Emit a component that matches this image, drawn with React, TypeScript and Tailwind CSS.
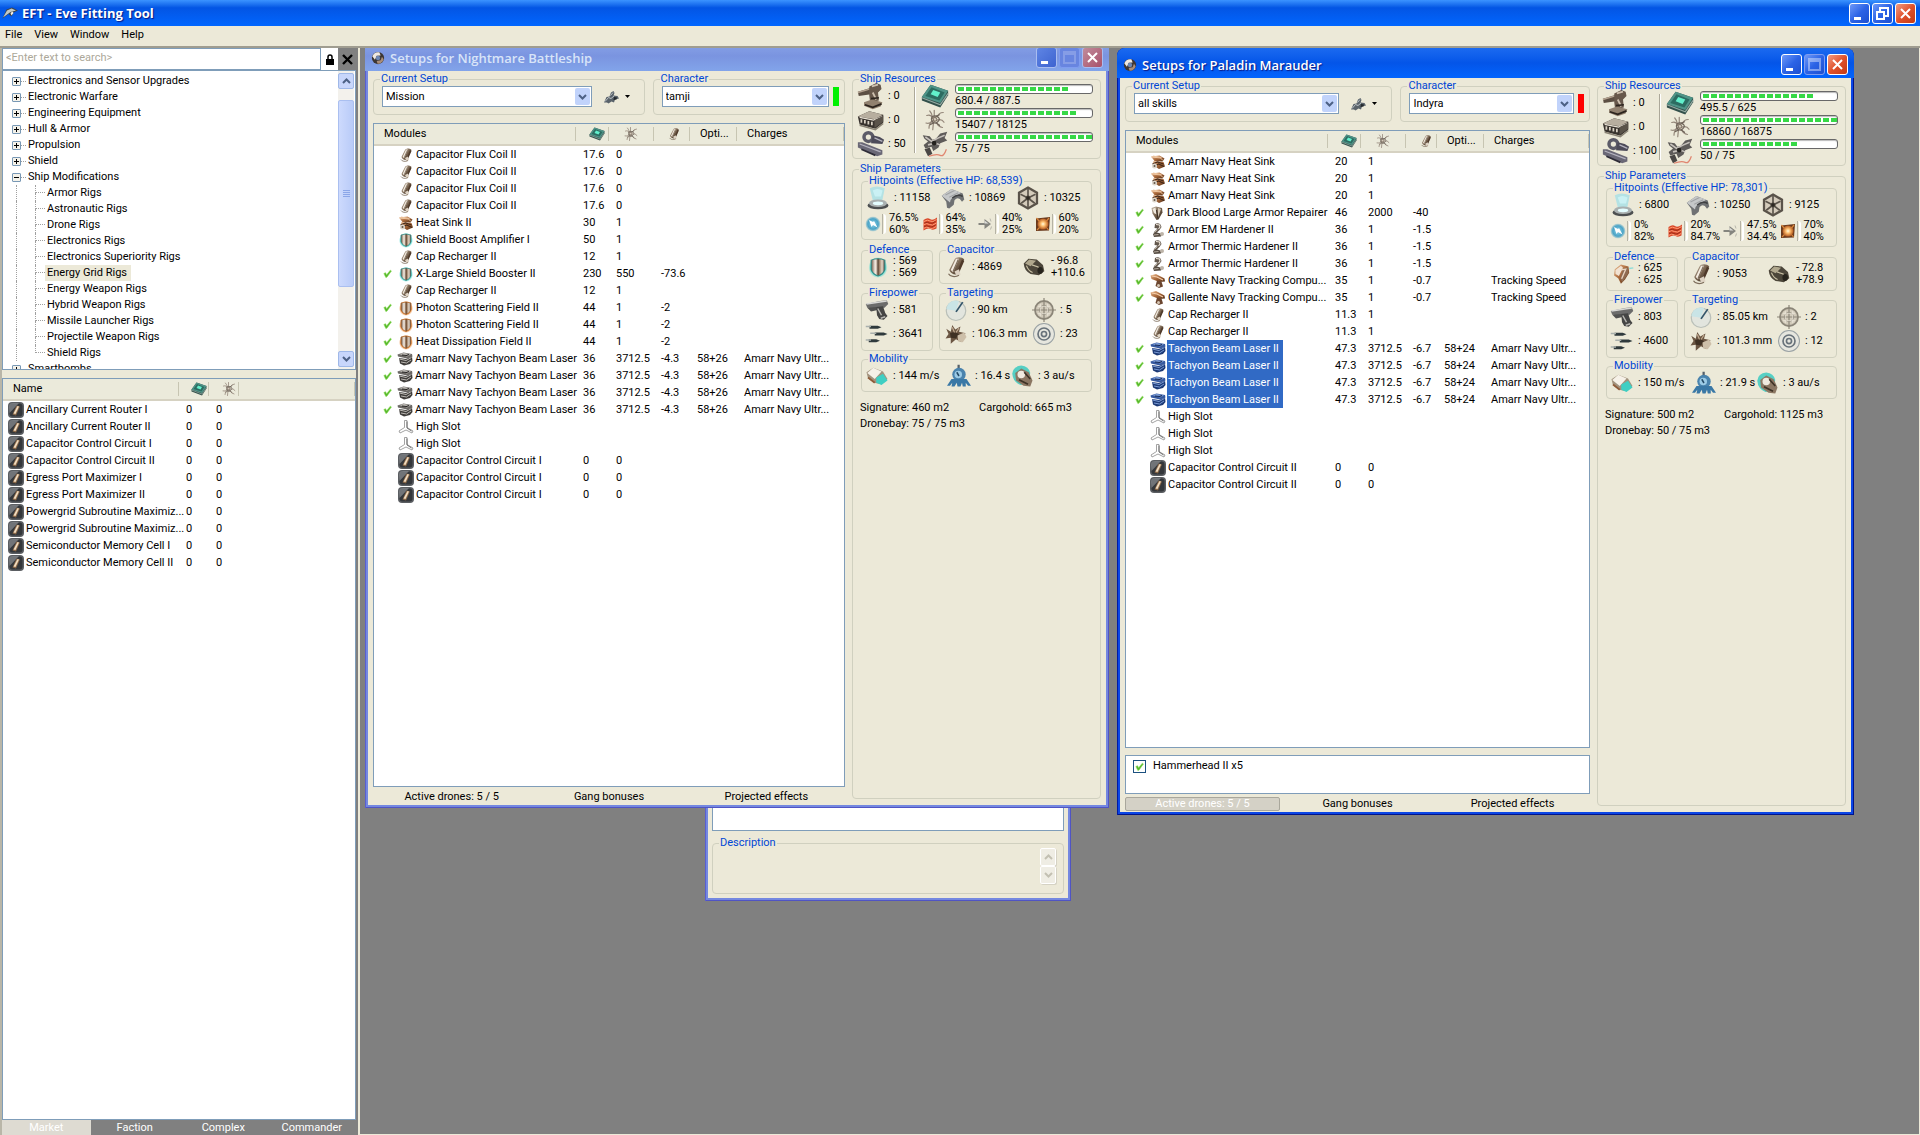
import React from 'react';
import { clsx } from 'clsx';

/* ---------- icons ---------- */

const Defs = () => (
  <svg className="absolute h-0 w-0" aria-hidden="true">
    <defs>
      <linearGradient id="steel" x1="0" y1="0" x2="1" y2="1">
        <stop offset="0" stopColor="#e2e0da" />
        <stop offset=".5" stopColor="#83817b" />
        <stop offset="1" stopColor="#2b2a28" />
      </linearGradient>
      <linearGradient id="bronze" x1="0" y1="0" x2="1" y2="1">
        <stop offset="0" stopColor="#c5b7a4" />
        <stop offset=".5" stopColor="#75604c" />
        <stop offset="1" stopColor="#2c231b" />
      </linearGradient>
      <linearGradient id="copper" x1="0" y1="0" x2="1" y2="1">
        <stop offset="0" stopColor="#efc095" />
        <stop offset=".5" stopColor="#a9683a" />
        <stop offset="1" stopColor="#4e2c16" />
      </linearGradient>
      <linearGradient id="plate" x1="0" y1="0" x2="1" y2="0">
        <stop offset="0" stopColor="#6d5340" />
        <stop offset=".3" stopColor="#f6efe6" />
        <stop offset=".55" stopColor="#8b6a4f" />
        <stop offset=".8" stopColor="#e6d9ca" />
        <stop offset="1" stopColor="#4a3a30" />
      </linearGradient>
      <radialGradient id="tealGlow">
        <stop offset=".7" stopColor="#3fd6cd" />
        <stop offset="1" stopColor="#4fd8cf" stopOpacity="0" />
      </radialGradient>
      <radialGradient id="orangeGlow">
        <stop offset=".7" stopColor="#ee8a36" />
        <stop offset="1" stopColor="#e98b3e" stopOpacity="0" />
      </radialGradient>
      <radialGradient id="emGlow">
        <stop offset="0" stopColor="#8fd3ea" />
        <stop offset=".7" stopColor="#4aa3c6" />
        <stop offset="1" stopColor="#4aa3c6" stopOpacity="0.2" />
      </radialGradient>
      <radialGradient id="fireGlow">
        <stop offset="0" stopColor="#fffbe0" />
        <stop offset=".4" stopColor="#ffc070" />
        <stop offset="1" stopColor="#b2581f" />
      </radialGradient>
    </defs>
  </svg>
);

const icons: Record<string, React.ReactNode> = {
  board: (
    <>
      <path d="M1 17 11 3l20 7v5L22 29 1 21Z" fill="#33504b" />
      <path d="M1 17 11 3l20 7-9 14Z" fill="#4f9488" />
      <path d="M5 16 12 6l15 6-6 9Z" fill="#2c6c61" />
      <path d="m11 14 3-5 8 3-3 5Z" fill="#62f0cc" />
      <path d="m1 18 21 8 9-13" stroke="#93aaa2" strokeWidth="1.5" fill="none" />
    </>
  ),
  grid: (
    <g fill="none" stroke="#94877a" strokeWidth="1.6" strokeLinecap="round">
      <path d="M15 3v10M14 19l-1 10M5 10q6-2 8 4M4 20q5 2 8-3M19 12q2-6 8-6M19 16q6-2 9 3M18 19q2 6 8 7M8 27q0-6 4-9M9 4q3 3 4 9" />
      <path d="M12 12q4-3 8 0t-1 7q-5 2-7-1t0-6ZM10 22q6-5 12 1M22 9q-6 2-9 9" stroke="#6f645a" />
      <path d="M13 14q3-3 5 0t-3 4Z" fill="#d4c9bc" stroke="#857869" />
    </g>
  ),
  cap: (
    <>
      <path d="M7 20 14 6c2-4 10-4 13 0L19 24c-2 4-10 2-12-4Z" fill="url(#bronze)" />
      <path d="m9 20 7-15h4l-8 18Z" fill="#f3ebe0" />
      <path d="m17 24 7-18 3 2-7 16Z" fill="#4f3a2a" />
      <path d="m14 22 6-3 2 7-5 3Z" fill="#ded3c4" />
      <path d="M6 25c2 4 9 5 14 2M19 6l-7 16" stroke="#7d6d5c" strokeWidth="1.6" fill="none" />
    </>
  ),
  heat: (
    <>
      <path d="m2 5 17-2 10 6-4 6L9 14Z" fill="url(#copper)" />
      <path d="m3 6 18 2 5 5M6 4l17 3" stroke="#f0c8a2" strokeWidth="2" fill="none" />
      <path d="m7 14 20 2 3 9-12 5L5 22Z" fill="url(#copper)" />
      <path d="m5 20 10-4 12 4M8 25l9-5 11 5" stroke="#432818" strokeWidth="2.4" fill="none" />
      <circle cx="9" cy="24" r="5" fill="#dcd6cc" />
      <circle cx="9" cy="24" r="2" fill="#615547" />
    </>
  ),
  shieldTeal: (
    <>
      <path d="M2 4q14-5 28 0v18q-4 8-14 10Q6 30 2 22Z" fill="url(#tealGlow)" />
      <path d="M6 6q10-4 20 0v14q-3 7-10 9-7-2-10-9Z" fill="url(#plate)" stroke="#2f8a86" strokeWidth="1.5" />
      <path d="M16 4v24" stroke="#43362c" strokeWidth="1.2" />
    </>
  ),
  shieldOrange: (
    <>
      <path d="M2 4q14-5 28 0v18q-4 8-14 10Q6 30 2 22Z" fill="url(#orangeGlow)" />
      <path d="M6 6q10-4 20 0v14q-3 7-10 9-7-2-10-9Z" fill="url(#plate)" stroke="#b2621f" strokeWidth="1.5" />
      <path d="M16 4v24" stroke="#5b3416" strokeWidth="1.2" />
    </>
  ),
  laser: (
    <>
      <path d="m1 7 12-4 17 3 1 5-11 4L2 11Z" fill="#6b6865" />
      <path d="m4 6 10-2 14 3-8 4Z" fill="#c1beb9" />
      <path d="m4 14 14 2 12-5 1 9-5 6-12 3-8-4Z" fill="#3f3d3b" />
      <path d="m5 16 13 3 11-6M8 22l11 2 9-6" stroke="#c9c6c1" strokeWidth="1.8" fill="none" />
      <path d="m10 8 9 1 5-2" stroke="#22201f" strokeWidth="2.4" fill="none" />
    </>
  ),
  laserBlue: (
    <>
      <path d="m1 7 12-4 17 3 1 5-11 4L2 11Z" fill="#36599f" />
      <path d="m4 6 10-2 14 3-8 4Z" fill="#7f9fd8" />
      <path d="m4 14 14 2 12-5 1 9-5 6-12 3-8-4Z" fill="#1d3a76" />
      <path d="m5 16 13 3 11-6M8 22l11 2 9-6" stroke="#84a5e0" strokeWidth="1.8" fill="none" />
      <path d="m10 8 9 1 5-2" stroke="#132650" strokeWidth="2.4" fill="none" />
    </>
  ),
  slot: (
    <g fill="#fff" stroke="#8b8b8b" strokeWidth="1.6" strokeLinejoin="round">
      <path d="M13 3h5v14l12 7-2 4-12-6-12 6-2-4 11-7Z" />
      <path d="M18 5v13l9 6" stroke="#555" fill="none" />
    </g>
  ),
  rig: (
    <>
      <rect width="32" height="32" rx="8" fill="#5b5e62" />
      <rect x="3" y="3" width="26" height="26" rx="6" fill="#34373b" />
      <path d="M2 10q0-8 8-8h12L3 22Z" fill="#8b8f93" opacity=".7" />
      <path d="m9 25 8-18 7 2-8 18Z" fill="#8a6848" />
      <path d="m11 23 8-15 3 1-7 15Z" fill="#f1dcc0" />
    </>
  ),
  repair: (
    <>
      <path d="m5 6 9-3 12 3 1 9-8 14-4 1-8-13Z" fill="url(#bronze)" />
      <path d="m7 8 6-3 2 14-5-3Z" fill="#f0e9de" />
      <path d="m18 6 6 2-6 17Z" fill="#d5c8b6" />
      <path d="m15 10 3 17" stroke="#3a2f26" strokeWidth="2" />
    </>
  ),
  repairBig: (
    <>
      <path d="m4 9 9-7 11 3 1 9-6 10-6 6-4-8-6-4Z" fill="url(#copper)" />
      <path d="m5 10 8-6 3 3-6 12-5-3Z" fill="#f1e2d2" />
      <path d="m16 8 7-2 1 8-9 14-3-6Z" fill="#8f6b51" />
      <path d="m13 10 7-1-6 14" stroke="#e9d4c0" strokeWidth="2" fill="none" />
      <path d="m25 8 6-1" stroke="#8fdcd8" strokeWidth="2" />
    </>
  ),
  hardener: (
    <>
      <path d="M10 4q6-3 11 1l2 5-4 6-8 8-4 1 1-5 7-7-6-1Z" fill="#62574d" />
      <path d="m12 5 7 1 1 4-3 4" stroke="#efe6da" strokeWidth="2.2" fill="none" />
      <path d="m6 24 8-3 10 3-2 5-14 1Z" fill="#544a41" />
      <circle cx="24" cy="24" r="4" fill="#bdb4a8" />
      <path d="m8 26 9-1M9 21l6-6" stroke="#cfc5b8" strokeWidth="1.6" />
    </>
  ),
  tracking: (
    <>
      <path d="m1 5 11-3 17 9 1 6-11 1L3 12Z" fill="url(#copper)" />
      <path d="m14 15 9 2 3 10-8 3-7-4Z" fill="#6b4630" />
      <path d="m4 6 10 2 12 6" stroke="#f5ceab" strokeWidth="2.2" fill="none" />
      <circle cx="17" cy="25" r="3" fill="#d7c7b6" />
    </>
  ),
  check: <path d="m3 16 6-3 4 7L26 4l4 3-16 22-4 1Z" fill="#55b82c" stroke="#8ddc55" strokeWidth="2" />,
  turret: (
    <>
      <path d="m1 11 17-5 3 4-5 4-14 2Z" fill="#5c4f43" />
      <path d="m1 12 17-5" stroke="#b3a290" strokeWidth="1.6" />
      <path d="m14 5 8-4 5 2 1 5-4 4 1 9-10 2-1-8Z" fill="#67584b" />
      <path d="m17 5 7-2M18 12l4 8" stroke="#cdbfae" strokeWidth="2" />
      <path d="m8 23 9-3 12 3-2 5-9 3-10-4Z" fill="#91816f" />
      <path d="m9 26 9 3 10-4M16 19l9-1" stroke="#2c241e" strokeWidth="2" fill="none" />
    </>
  ),
  launcher: (
    <>
      <path d="M1 12 14 6l16 4v9l-9 7L3 21Z" fill="#38332e" />
      <path d="m1 12 13-6 16 4-10 5Z" fill="#b7ae9f" />
      <path d="m3 13 16 3 10-4" stroke="#e9e2d5" strokeWidth="1.4" fill="none" />
      <path d="M5 15v4M9 16v4M13 17v4M17 18v4" stroke="#d9d1c3" strokeWidth="2" />
      <path d="M20 16v9l10-7v-7Z" fill="#5a534a" />
      <path d="m3 22 18 5 9-7" stroke="#8a8375" strokeWidth="1.6" fill="none" />
    </>
  ),
  calib: (
    <>
      <circle cx="13" cy="8" r="5" fill="none" stroke="#5c5b68" strokeWidth="4" />
      <path d="m18 6 8 2 5 3-2 5-13-1Z" fill="#4d4b59" />
      <path d="M1 14h5l23 9v5l-6 2L1 20Z" fill="#6a6876" />
      <path d="m3 16 24 9M20 9l9 4" stroke="#b5b3bf" strokeWidth="1.5" />
      <path d="m5 22 16 7" stroke="#2e2c37" strokeWidth="2" />
    </>
  ),
  drones: (
    <>
      <path d="m2 6 8 1 3 4 4-1 5-6 8-2-3 7 3 3-8 3-2 5-6 4-2-5-7 2-2-4 5-4-4-3Z" fill="#5e5b59" />
      <path d="m5 8 7 5 8-4 7-3M8 17l8-2 6 2" stroke="#c6c1bb" strokeWidth="1.8" fill="none" />
      <path d="m4 22 6-2 3 7-5 3Z" fill="#4a4745" />
      <path d="M9 30q9-3 13-1t7-7" stroke="#e0856f" strokeWidth="1.4" fill="none" />
      <circle cx="15" cy="15" r="2.6" fill="#24221f" />
    </>
  ),
  hpShield: (
    <>
      <path d="M5 3q9-5 20 0l-4 20H10Z" fill="#86dcee" opacity=".55" />
      <path d="M9 6q6-4 13 0l-2 8H12Z" fill="#d9fbff" opacity=".6" />
      <ellipse cx="16" cy="26" rx="14" ry="5" fill="#4c4f50" />
      <ellipse cx="16" cy="23" rx="12" ry="5" fill="#a9b0b0" />
      <ellipse cx="16" cy="23" rx="7" ry="2.5" fill="#e4fdff" />
    </>
  ),
  hpArmor: (
    <>
      <path d="M1 13 14 4l15 6 2 8-3 3q-5-8-10-2l-1 6-6 5-3-1-1-8Z" fill="#6f7173" />
      <path d="M1 13 14 4l13 5-12 7q-3 2-3 6Z" fill="#c6c8c9" />
      <path d="m6 12 12-6M11 15l12-6" stroke="#a0a2a4" strokeWidth="1.4" />
      <path d="M15 16q7-6 14-2" stroke="#3f4042" strokeWidth="2" fill="none" />
    </>
  ),
  hpHull: (
    <g fill="none" stroke="#5a534a">
      <path d="m16 2 12 7v14l-12 7-12-7V9Z" fill="#d4cbbb" strokeWidth="3" />
      <path d="m16 16-10-5M16 16l10-5M16 16v13M16 16V4M16 16 7 23M16 16l9 7" strokeWidth="2.2" />
      <circle cx="16" cy="16" r="3" fill="#2d2822" />
    </g>
  ),
  em: (
    <>
      <circle cx="16" cy="16" r="15" fill="url(#emGlow)" />
      <path d="m8 8 8 4 2-2 7 13-9-5-3 4Z" fill="#fff" />
    </>
  ),
  thermal: (
    <>
      <path d="M3 8q8-6 13-2t14-3l-1 22q-7 4-12 1t-14 3Z" fill="#d9482a" />
      <path d="M4 11q7-5 12-1t13-3M2 18q8-5 13-1t14-3M3 25q7-5 12-1t13-3" stroke="#ff9a74" strokeWidth="2" fill="none" />
      <path d="M5 14q6-3 10 0t12-3M4 21q6-3 10 0t13-3" stroke="#8f2814" strokeWidth="1.6" fill="none" />
    </>
  ),
  kinetic: (
    <>
      <path d="M1 14h12V6l13 10-13 10v-8H1Z" fill="#85857f" />
      <path d="M1 15h12V9l8 6Z" fill="#dededa" />
      <path d="m24 5 2 6M25 27l2-6" stroke="#b8b6ac" strokeWidth="2" />
    </>
  ),
  explosive: (
    <>
      <path d="M2 5 30 2l-2 27-26 1Z" fill="#6a3a1d" />
      <circle cx="16" cy="16" r="11" fill="url(#fireGlow)" />
      <path d="m3 4 5 6M28 4l-5 6M4 28l5-5M27 28l-4-5" stroke="#d9853a" strokeWidth="2.4" />
    </>
  ),
  recharge: (
    <>
      <path d="M1 11 8 4l12 1 9 8 2 9-8 6-12-2Q2 22 1 11Z" fill="#4c463a" />
      <path d="m3 11 6-6 10 2-8 8Z" fill="#b0a78d" />
      <path d="m13 13 9 3 5 10M5 14q3 8 9 10" stroke="#c9c0a4" strokeWidth="1.8" fill="none" />
      <ellipse cx="25" cy="21" rx="4" ry="5" fill="#26231c" />
    </>
  ),
  guns: (
    <>
      <path d="m1 8 19-4 9-1 2 5-5 5-11 1-12-1Z" fill="#6c6c6b" />
      <path d="m2 8 20-3 7-1" stroke="#d8d8d5" strokeWidth="2" fill="none" />
      <path d="m3 13 12-1 2 4-9 2Z" fill="#515150" />
      <path d="m15 12 9-1 3 9 3 4-5 5-6-1-3-5Z" fill="#454544" />
      <path d="m17 14 5 9M21 27l6-2" stroke="#b8b7b2" strokeWidth="2" />
    </>
  ),
  volley: (
    <>
      <path d="M6 5h11l5 2-5 2H6ZM13 14h12l5 2-5 2H13ZM5 23h10l5 2-5 2H5Z" fill="#2f3a3d" />
      <path d="M1 6h7M7 15h8M1 24h7" stroke="#a9b0ad" strokeWidth="2" />
    </>
  ),
  range: (
    <>
      <circle cx="16" cy="17" r="13" fill="#e2e5de" stroke="#b9bfb8" strokeWidth="1.6" />
      <path d="M3 15A13 13 0 0 1 20 4l-4 13Z" fill="#c9e4e6" />
      <path d="m15 18 9-13 2 1-9 13Z" fill="#35566b" />
    </>
  ),
  locked: (
    <g fill="none" stroke="#8b8578">
      <circle cx="16" cy="16" r="12" fill="#d2cbbb" strokeWidth="2.4" />
      <circle cx="16" cy="16" r="6" strokeWidth="1.4" />
      <path d="M0 16h32M16 0v32" strokeWidth="1.6" />
      <path d="M8 11h16M8 21h16M11 8v16M21 8v16" strokeWidth="1" stroke="#f0ebdf" />
    </g>
  ),
  resolution: (
    <>
      <path d="m3 9 6 4 2-9 4 6 7-4-2 7 9 2-7 4 1 8-7-4-7 6v-8l-7 1 4-6Z" fill="#6b5643" />
      <path d="m8 15 6-2 6 3-4 6-7-1Z" fill="#3f3124" />
      <path d="m18 18 9-4 3 6-5 7-6-1Z" fill="#cdbfa9" />
      <path d="m11 7 3 7M20 8l-4 6" stroke="#c2ab91" strokeWidth="1.6" />
    </>
  ),
  signal: (
    <g fill="none" stroke="#68727a">
      <circle cx="16" cy="16" r="14" fill="#e6e6de" strokeWidth="1.4" stroke="#9aa2a4" />
      <circle cx="16" cy="16" r="8" strokeWidth="2.2" />
      <circle cx="16" cy="16" r="3.4" strokeWidth="2.2" />
    </g>
  ),
  speed: (
    <>
      <path d="m2 11 9-6 13 5 6 10-8 7-10-2-8-6Z" fill="#a2937e" />
      <path d="m3 12 8-7 11 5-9 10Z" fill="#f6f1e8" />
      <path d="m15 18 9-5 6 9-8 6-7-3Z" fill="#3fcfc3" />
      <path d="m4 18 9 7" stroke="#8f5c3a" strokeWidth="2.4" />
    </>
  ),
  align: (
    <>
      <path d="M14 1h3v7h-3Z" fill="#56606a" />
      <circle cx="16" cy="14" r="9" fill="#4a83ad" />
      <circle cx="15" cy="14" r="5" fill="#9ccbe6" />
      <path d="m13 11 3 5" stroke="#234966" strokeWidth="2" />
      <path d="m6 20 20 0 6 9h-4l-3-4v5h-4l-1-5-2 5h-4l-1-5-3 5H6l1-5-3 4H0Z" fill="#3a78a6" />
    </>
  ),
  warp: (
    <>
      <path d="M3 13Q4 3 15 2q10 1 12 10l-4 14-9 2Q4 24 3 13Z" fill="#56cfc4" />
      <path d="m7 12 8-6 10 5 5 11-3 8-9-1-10-7Z" fill="#8b7763" />
      <circle cx="15" cy="14" r="5" fill="#f0eadf" />
      <path d="m12 21 12 6M19 11l8 9" stroke="#3e3226" strokeWidth="2.2" />
    </>
  ),
  ring: (
    <>
      <circle cx="16" cy="16" r="14" fill="#3c3532" />
      <path d="M3 12Q8 1 19 3l3 7-9 1-4 9Z" fill="#efe9e2" />
      <path d="M29 19q-4 11-14 10l-2-6 9-2 3-8Z" fill="#a98d79" />
      <circle cx="16" cy="16" r="5" fill="#6d87b5" />
    </>
  ),
  ship: (
    <>
      <path d="M1 27 9 9 20 5l12 6-9 4-4 8-6-5Z" fill="#3c4347" />
      <path d="m2 25 8-14 9-4 9 4-11 3Z" fill="#c3c9c6" />
      <path d="m17 16 4-3 2 3-4 5Z" fill="#f4f0e4" />
    </>
  ),
  tool: (
    <>
      <path d="m2 27 5-11 6-1 3-8 5-3 2 4-2 5 8 1 3 5-8 2-2 6-5-2-6 4-3-2Z" fill="#59626a" />
      <path d="m4 25 7-8 5 2 6-5M15 13l5-6" stroke="#bcc2c6" strokeWidth="2" fill="none" />
      <path d="m22 16 6 1-1 4-6 1Z" fill="#23282c" />
    </>
  ),
};

const Icon = ({ name, className = 'size-4' }: { name: string; className?: string }) => (
  <svg viewBox="0 0 32 32" className={clsx('shrink-0', className)} aria-hidden="true">
    {icons[name]}
  </svg>
);

const Chevron = ({ up = false, color = '#4d6185' }: { up?: boolean; color?: string }) => (
  <svg viewBox="0 0 9 6" className="h-[6px] w-[9px]" aria-hidden="true">
    <path d={up ? 'M1 5 4.5 1.5 8 5' : 'M1 1 4.5 4.5 8 1'} stroke={color} strokeWidth="2" fill="none" />
  </svg>
);

/* ---------- window chrome ---------- */

const captionIcons = {
  Minimize: <path d="M5 14h7v3H5Z" fill="#fff" />,
  Maximize: <path d="M5 5h11v11H5ZM5 7h11" stroke="#fff" strokeWidth="2" fill="none" />,
  Restore: <path d="M8 8V5h8v8h-3M5 9h7v7H5Z" stroke="#fff" strokeWidth="2" fill="none" />,
  Close: <path d="m6 6 9 9M15 6l-9 9" stroke="#fff" strokeWidth="2" fill="none" />,
};

type Caption = keyof typeof captionIcons;

const CaptionButton = ({ kind, active, disabled }: { kind: Caption; active: boolean; disabled?: boolean }) => (
  <button
    aria-label={kind}
    disabled={disabled}
    className={clsx(
      'size-[21px] rounded-[3px] border',
      disabled ? 'border-[#7f9cf0]' : active ? 'border-white' : 'border-[#a9bdf0]',
      kind === 'Close'
        ? active
          ? 'bg-linear-to-br from-[#f09a80] via-[#e0512b] to-[#c53a12]'
          : 'bg-linear-to-br from-[#c08c9c] to-[#a8506a]'
        : active
          ? 'bg-linear-to-br from-[#6e98f8] via-[#2c63e6] to-[#1d4fd0]'
          : disabled
            ? 'bg-[#6885e0]'
            : 'bg-linear-to-br from-[#5f85e4] to-[#3e63d0]',
    )}
  >
    <svg viewBox="1 1 19 19" className={clsx('size-full', disabled && (active ? 'opacity-40' : 'opacity-20'))}>
      {captionIcons[kind]}
    </svg>
  </button>
);

interface WindowProps {
  title: string;
  active?: boolean;
  className: string;
  children: React.ReactNode;
}

const MdiWindow = ({ title, active = false, className, children }: WindowProps) => (
  <section
    className={clsx(
      'absolute flex flex-col rounded-t-lg px-[3px] pb-[3px]',
      active
        ? 'bg-[#0a46e6] shadow-[inset_1px_0_0_#0019a8,inset_-1px_-1px_0_#00138c]'
        : 'bg-[#7488e0] shadow-[inset_1px_0_0_#5a5fd0,inset_-1px_-1px_0_#5054c4]',
      className,
    )}
  >
    <header
      className={clsx(
        '-mx-[3px] flex h-[30px] shrink-0 items-center rounded-t-lg px-[6px] pt-[3px]',
        active
          ? 'bg-linear-to-b from-[#1b6af0] via-[#0455e8] to-[#0264fe]'
          : 'bg-linear-to-b from-[#8aa4e8] via-[#7a94e0] to-[#82a4ea]',
      )}
    >
      <Icon name="ring" className="size-[14px]" />
      <h2
        className={clsx(
          'ml-[5px] flex-1 font-[Open_Sans,sans-serif] text-[13px] font-semibold',
          active ? 'text-white [text-shadow:1px_1px_1px_#0a1883]' : 'text-[#d8e4f8]',
        )}
      >
        {title}
      </h2>
      <div className="flex gap-[2px]">
        <CaptionButton kind="Minimize" active={active} />
        <CaptionButton kind="Maximize" active={active} disabled />
        <CaptionButton kind="Close" active={active} />
      </div>
    </header>
    {children}
  </section>
);

const Group = ({ title, className, children }: { title: string; className?: string; children?: React.ReactNode }) => (
  <fieldset className={clsx('min-w-0 rounded border border-[#d0d0bf]', className)}>
    <legend className="ml-[6px] h-[10px] px-px leading-[10px] text-[#0046d5]">{title}</legend>
    {children}
  </fieldset>
);

const Dropdown = ({ label, value }: { label: string; value: string }) => (
  <div className="relative min-w-0 flex-1">
    <select
      aria-label={label}
      className="block h-[21px] w-full appearance-none border border-[#7f9db9] bg-white pl-[3px] text-black"
    >
      <option>{value}</option>
    </select>
    <span className="pointer-events-none absolute inset-y-[2px] right-[2px] flex w-[15px] items-center justify-center rounded-[2px] bg-[#c1d3fb]">
      <Chevron />
    </span>
  </div>
);

/* ---------- modules ---------- */

interface Module {
  icon: string;
  name: string;
  values: string[];
  on?: boolean;
  selected?: boolean;
}

const times = (n: number, m: Module): Module[] => Array.from({ length: n }, () => m);

const nightmare: Module[] = [
  ...times(4, { icon: 'cap', name: 'Capacitor Flux Coil II', values: ['17.6', '0'] }),
  { icon: 'heat', name: 'Heat Sink II', values: ['30', '1'] },
  { icon: 'shieldTeal', name: 'Shield Boost Amplifier I', values: ['50', '1'] },
  { icon: 'cap', name: 'Cap Recharger II', values: ['12', '1'] },
  { icon: 'shieldTeal', name: 'X-Large Shield Booster II', values: ['230', '550', '-73.6'], on: true },
  { icon: 'cap', name: 'Cap Recharger II', values: ['12', '1'] },
  ...times(2, { icon: 'shieldOrange', name: 'Photon Scattering Field II', values: ['44', '1', '-2'], on: true }),
  { icon: 'shieldOrange', name: 'Heat Dissipation Field II', values: ['44', '1', '-2'], on: true },
  ...times(4, {
    icon: 'laser',
    name: 'Amarr Navy Tachyon Beam Laser',
    values: ['36', '3712.5', '-4.3', '58+26', 'Amarr Navy Ultr...'],
    on: true,
  }),
  ...times(2, { icon: 'slot', name: 'High Slot', values: [] }),
  ...times(3, { icon: 'rig', name: 'Capacitor Control Circuit I', values: ['0', '0'] }),
];

const paladin: Module[] = [
  ...times(3, { icon: 'heat', name: 'Amarr Navy Heat Sink', values: ['20', '1'] }),
  { icon: 'repair', name: 'Dark Blood Large Armor Repairer', values: ['46', '2000', '-40'], on: true },
  { icon: 'hardener', name: 'Armor EM Hardener II', values: ['36', '1', '-1.5'], on: true },
  ...times(2, { icon: 'hardener', name: 'Armor Thermic Hardener II', values: ['36', '1', '-1.5'], on: true }),
  ...times(2, {
    icon: 'tracking',
    name: 'Gallente Navy Tracking Compu...',
    values: ['35', '1', '-0.7', '', 'Tracking Speed'],
    on: true,
  }),
  ...times(2, { icon: 'cap', name: 'Cap Recharger II', values: ['11.3', '1'] }),
  ...times(4, {
    icon: 'laserBlue',
    name: 'Tachyon Beam Laser II',
    values: ['47.3', '3712.5', '-6.7', '58+24', 'Amarr Navy Ultr...'],
    on: true,
    selected: true,
  }),
  ...times(3, { icon: 'slot', name: 'High Slot', values: [] }),
  ...times(2, { icon: 'rig', name: 'Capacitor Control Circuit II', values: ['0', '0'] }),
];

const Th = ({ children, className }: { children?: React.ReactNode; className?: string }) => (
  <th
    className={clsx(
      'h-[21px] border-b-2 border-[#d6d2c2] bg-[#ebeadb] bg-[linear-gradient(#c7c5b2,#c7c5b2)] bg-[length:1px_14px] bg-right bg-no-repeat p-0 text-left font-normal',
      className,
    )}
  >
    {children}
  </th>
);

const ModuleTable = ({ modules, narrowCap }: { modules: Module[]; narrowCap: boolean }) => (
  <div className="min-h-0 flex-1 overflow-hidden border border-[#7f9db9] bg-white">
    <table className="w-full table-fixed border-collapse whitespace-nowrap">
      <colgroup>
        <col className="w-[202px]" />
        <col className="w-[33px]" />
        <col className="w-[45px]" />
        <col className={narrowCap ? 'w-[31px]' : 'w-[36px]'} />
        <col className="w-[47px]" />
        <col />
      </colgroup>
      <thead>
        <tr>
          <Th className="pl-[10px]">Modules</Th>
          <Th>
            <Icon name="board" className="ml-[13px] size-4" />
          </Th>
          <Th>
            <Icon name="grid" className="ml-[14px] size-4" />
          </Th>
          <Th>
            <Icon name="cap" className="ml-[13px] size-[14px]" />
          </Th>
          <Th className="pl-[10px]">Opti...</Th>
          <Th className="pl-[10px]">Charges</Th>
        </tr>
      </thead>
      <tbody>
        {modules.map((m, i) => (
          <tr key={i} className="h-[17px]">
            <td className="p-0 leading-[17px]">
              <div className="flex items-center pl-[9px]">
                <span className="mr-[5px] flex w-[10px] items-center">
                  {m.on && <Icon name="check" className="size-[9px]" />}
                </span>
                <Icon name={m.icon} />
                <span className={clsx('ml-px px-px', m.selected && 'bg-[#316ac5] pr-1 text-white')}>{m.name}</span>
              </div>
            </td>
            {[0, 1, 2, 3, 4].map((c) => (
              <td key={c} className="p-0 pl-[7px] leading-[17px]">
                {m.values[c]}
              </td>
            ))}
          </tr>
        ))}
      </tbody>
    </table>
  </div>
);

/* ---------- ship stats ---------- */

interface Ship {
  hardpoints: string[];
  resources: { label: string; chunks: number }[];
  ehp: string;
  hp: string[];
  resists: string[][];
  defenceIcon: string;
  defence: string[];
  capacitor: string;
  capRates: string[];
  firepower: string[];
  targeting: string[];
  mobility: string[];
  signature: string;
  cargohold: string;
  dronebay: string;
}

const Pair = ({ lines }: { lines: string[] }) => (
  <div className="leading-[12px]">
    {lines.map((l, i) => (
      <div key={i}>{l}</div>
    ))}
  </div>
);

const Stat = ({ icon, text, className }: { icon: string; text: string; className?: string }) => (
  <div className={clsx('flex h-6 items-center whitespace-nowrap', className)}>
    <Icon name={icon} className="size-6" />
    <span className="ml-1">: {text}</span>
  </div>
);

const ShipStats = ({ ship }: { ship: Ship }) => (
  <aside className="flex w-[249px] shrink-0 flex-col gap-[5px]">
    <Group title="Ship Resources">
      <div className="flex pr-[7px] pb-[2px] pl-[4px]">
        <div className="w-[59px]">
          {['turret', 'launcher', 'calib'].map((name, i) => (
            <div key={name} className="flex h-6 items-center">
              <Icon name={name} className="size-7" />
              <span className="ml-[3px]">: {ship.hardpoints[i]}</span>
            </div>
          ))}
        </div>
        <div className="my-[3px] mr-[5px] w-[2px] border-r border-l border-r-white border-l-[#aca899]" />
        <div className="flex-1">
          {['board', 'grid', 'drones'].map((name, i) => (
            <div key={name} className="flex h-6 items-center gap-[6px]">
              <Icon name={name} className={name === 'grid' ? 'mx-[2px] size-6' : 'size-7'} />
              <div className="min-w-0 flex-1">
                <div className="flex h-[10px] items-center gap-[2px] overflow-hidden rounded-[3px] border border-[#686868] bg-white pl-[2px] shadow-[inset_0_1px_1px_#bbb]">
                  {Array.from({ length: ship.resources[i].chunks }, (_, c) => (
                    <span key={c} className="h-1 w-[6px] shrink-0 bg-[#36d846]" />
                  ))}
                </div>
                <div className="h-[14px] leading-[14px]">{ship.resources[i].label}</div>
              </div>
            </div>
          ))}
        </div>
      </div>
    </Group>
    <Group title="Ship Parameters" className="flex-1">
      <div className="px-2 pt-[2px]">
        <Group title={`Hitpoints (Effective HP: ${ship.ehp})`}>
          <div className="grid grid-cols-3 pb-[2px] pl-[4px]">
            {['hpShield', 'hpArmor', 'hpHull'].map((name, i) => (
              <Stat key={name} icon={name} text={ship.hp[i]} />
            ))}
          </div>
          <div className="grid grid-cols-4 pb-[3px] pl-[3px]">
            {['em', 'thermal', 'kinetic', 'explosive'].map((name, i) => (
              <div key={name} className="flex h-6 items-center">
                <Icon name={name} className="size-4" />
                <span className="mr-[3px] ml-px h-5 w-[4px] rounded-r-[3px] border-r-2 border-l border-r-white border-l-[#b5b2a4]" />
                <Pair lines={ship.resists[i]} />
              </div>
            ))}
          </div>
        </Group>
        <div className="mt-[5px] grid grid-cols-[72px_1fr] gap-x-[6px] gap-y-[4px]">
          <Group title="Defence">
            <div className="flex h-6 items-center pl-[5px]">
              <Icon name={ship.defenceIcon} className="size-[22px]" />
              <div className="ml-1">
                <Pair lines={ship.defence.map((d) => `: ${d}`)} />
              </div>
            </div>
            <div className="h-1" />
          </Group>
          <Group title="Capacitor">
            <div className="flex h-6 items-center pl-[4px]">
              <Stat icon="cap" text={ship.capacitor} className="w-[79px]" />
              <Icon name="recharge" className="mr-[6px] size-[22px]" />
              <Pair lines={ship.capRates} />
            </div>
          </Group>
          <Group title="Firepower">
            <div className="flex flex-col pb-1 pl-[3px]">
              <Stat icon="guns" text={ship.firepower[0]} />
              <Stat icon="volley" text={ship.firepower[1]} />
            </div>
          </Group>
          <Group title="Targeting">
            <div className="grid grid-cols-[88px_1fr] pb-[2px] pl-[4px]">
              {['range', 'locked', 'resolution', 'signal'].map((name, i) => (
                <Stat key={name} icon={name} text={ship.targeting[i]} />
              ))}
            </div>
          </Group>
        </div>
        <Group title="Mobility" className="mt-[3px]">
          <div className="grid grid-cols-[82px_63px_1fr] pb-[3px] pl-[3px]">
            {['speed', 'align', 'warp'].map((name, i) => (
              <Stat key={name} icon={name} text={ship.mobility[i]} />
            ))}
          </div>
        </Group>
        <div className="mt-[8px] -ml-px grid grid-cols-[119px_1fr] leading-4 whitespace-nowrap">
          <span>Signature: {ship.signature}</span>
          <span>Cargohold: {ship.cargohold}</span>
          <span>Dronebay: {ship.dronebay}</span>
        </div>
      </div>
    </Group>
  </aside>
);

interface SetupProps {
  setup: string;
  character: string;
  skillsOk: boolean;
  modules: Module[];
  ship: Ship;
  drones?: string;
}

const SetupBody = ({ setup, character, skillsOk, modules, ship, drones }: SetupProps) => (
  <div className="flex min-h-0 flex-1 gap-[7px] bg-[#ece9d8] px-[5px] pt-[3px] pb-px">
    <div className="flex min-w-0 flex-1 flex-col">
      <div className="mb-2 flex gap-2">
        <Group title="Current Setup" className="flex-1 basis-[271px]">
          <div className="flex items-center pt-[2px] pr-[14px] pb-[7px] pl-[8px]">
            <Dropdown label="Current Setup" value={setup} />
            <button aria-label="Setup tools" className="ml-[11px] flex items-center gap-[6px]">
              <Icon name="tool" />
              <svg viewBox="0 0 5 3" className="h-[3px] w-[5px]">
                <path d="M0 0h5L2.5 3Z" />
              </svg>
            </button>
          </div>
        </Group>
        <Group title="Character" className="flex-1 basis-[192px]">
          <div className="flex items-center gap-[4px] pt-[2px] pr-[5px] pb-[7px] pl-[8px]">
            <Dropdown label="Character" value={character} />
            <span className={clsx('h-[19px] w-[6px]', skillsOk ? 'bg-[#00f000]' : 'bg-[#ff0000]')} />
          </div>
        </Group>
      </div>
      <ModuleTable modules={modules} narrowCap={Boolean(drones)} />
      {drones && (
        <div className="mt-[7px] h-[39px] border border-[#7f9db9] bg-white pt-[3px] pl-[7px]">
          <label className="flex items-center gap-[7px]">
            <span className="relative size-[13px]">
              <input
                type="checkbox"
                defaultChecked
                className="block size-[13px] appearance-none border border-[#1c5180] bg-white"
              />
              <Icon name="check" className="pointer-events-none absolute inset-[2px] size-[9px]" />
            </span>
            {drones}
          </label>
        </div>
      )}
      <div className="mt-[3px] grid grid-cols-3 leading-[14px]">
        <button
          className={clsx(
            'h-[14px]',
            drones && 'rounded-[2px] border border-[#a9a79c] bg-[#d4d1c6] leading-[12px] text-white',
          )}
        >
          Active drones: 5 / 5
        </button>
        <button>Gang bonuses</button>
        <button>Projected effects</button>
      </div>
    </div>
    <div className="flex pb-[5px]">
      <ShipStats ship={ship} />
    </div>
  </div>
);

const nightmareShip: Ship = {
  hardpoints: ['0', '0', '50'],
  resources: [
    { label: '680.4 / 887.5', chunks: 14 },
    { label: '15407 / 18125', chunks: 15 },
    { label: '75 / 75', chunks: 17 },
  ],
  ehp: '68,539',
  hp: ['11158', '10869', '10325'],
  resists: [
    ['76.5%', '60%'],
    ['64%', '35%'],
    ['40%', '25%'],
    ['60%', '20%'],
  ],
  defenceIcon: 'shieldTeal',
  defence: ['569', '569'],
  capacitor: '4869',
  capRates: ['- 96.8', '+110.6'],
  firepower: ['581', '3641'],
  targeting: ['90 km', '5', '106.3 mm', '23'],
  mobility: ['144 m/s', '16.4 s', '3 au/s'],
  signature: '460 m2',
  cargohold: '665 m3',
  dronebay: '75 / 75 m3',
};

const paladinShip: Ship = {
  hardpoints: ['0', '0', '100'],
  resources: [
    { label: '495.5 / 625', chunks: 14 },
    { label: '16860 / 16875', chunks: 17 },
    { label: '50 / 75', chunks: 12 },
  ],
  ehp: '78,301',
  hp: ['6800', '10250', '9125'],
  resists: [
    ['0%', '82%'],
    ['20%', '84.7%'],
    ['47.5%', '34.4%'],
    ['70%', '40%'],
  ],
  defenceIcon: 'repairBig',
  defence: ['625', '625'],
  capacitor: '9053',
  capRates: ['- 72.8', '+78.9'],
  firepower: ['803', '4600'],
  targeting: ['85.05 km', '2', '101.3 mm', '12'],
  mobility: ['150 m/s', '21.9 s', '3 au/s'],
  signature: '500 m2',
  cargohold: '1125 m3',
  dronebay: '50 / 75 m3',
};

/* ---------- market sidebar ---------- */

const categories = [
  'Electronics and Sensor Upgrades',
  'Electronic Warfare',
  'Engineering Equipment',
  'Hull & Armor',
  'Propulsion',
  'Shield',
];

const rigGroups = [
  'Armor Rigs',
  'Astronautic Rigs',
  'Drone Rigs',
  'Electronics Rigs',
  'Electronics Superiority Rigs',
  'Energy Grid Rigs',
  'Energy Weapon Rigs',
  'Hybrid Weapon Rigs',
  'Missile Launcher Rigs',
  'Projectile Weapon Rigs',
  'Shield Rigs',
];

const rigs = [
  'Ancillary Current Router I',
  'Ancillary Current Router II',
  'Capacitor Control Circuit I',
  'Capacitor Control Circuit II',
  'Egress Port Maximizer I',
  'Egress Port Maximizer II',
  'Powergrid Subroutine Maximiz...',
  'Powergrid Subroutine Maximiz...',
  'Semiconductor Memory Cell I',
  'Semiconductor Memory Cell II',
];

const TreeRoot = ({ label, open = false }: { label: string; open?: boolean }) => (
  <div className="flex h-4 items-center pl-[9px]">
    <button aria-label={`Toggle ${label}`} className="size-[9px] rounded-[1px] border border-[#7898b5] bg-[#f4f2ea]">
      <svg viewBox="0 0 7 7" className="size-full">
        <path d={open ? 'M1 3.5h5' : 'M1 3.5h5M3.5 1v5'} stroke="#000" />
      </svg>
    </button>
    <span className="w-[5px] border-t border-dotted border-[#a0a0a0]" />
    <span className="px-[2px]">{label}</span>
  </div>
);

const TreeLeaf = ({ label, last, selected }: { label: string; last: boolean; selected: boolean }) => (
  <li className="flex h-4 items-center pl-[13px]">
    <span className="h-4 w-[19px] border-l border-dotted border-[#a0a0a0]" />
    <span className="w-[10px]">
      <span className="block h-2 border-b border-l border-dotted border-[#a0a0a0]" />
      <span className={clsx('block h-2', !last && 'border-l border-dotted border-[#a0a0a0]')} />
    </span>
    <span className={clsx('h-4 px-[2px] leading-4', selected && 'bg-[#ece9d8] pr-1')}>{label}</span>
  </li>
);

const Sidebar = () => (
  <nav className="flex w-[360px] shrink-0 flex-col border-r-2 border-[#ece9d8] bg-[#808080]">
    <div className="flex min-h-0 flex-1 flex-col border-l-2 border-[#b9b6a8] pr-[2px]">
      <div className="flex h-[22px]">
        <input
          aria-label="Search"
          placeholder="<Enter text to search>"
          className="min-w-0 flex-1 border border-[#7f9db9] bg-white pb-[2px] pl-[3px] placeholder:text-[#aca899]"
        />
        <button aria-label="Lock" className="flex w-[17px] items-center justify-center bg-white">
          <svg viewBox="0 0 10 11" className="h-[11px] w-[10px]">
            <path d="M1 5h8v6H1Z" />
            <path d="M3 5V3q0-2 2-2t2 2v2" stroke="#000" strokeWidth="1.5" fill="none" />
          </svg>
        </button>
        <button aria-label="Clear" className="flex w-[18px] items-center justify-center">
          <svg viewBox="0 0 11 11" className="size-[11px]">
            <path d="m1 1 9 9M10 1l-9 9" stroke="#000" strokeWidth="2.4" />
          </svg>
        </button>
      </div>
      <div className="flex h-[300px] shrink-0 border border-[#7f9db9] bg-white">
        <div className="min-w-0 flex-1 overflow-hidden pt-[2px]">
          {categories.map((c) => (
            <TreeRoot key={c} label={c} />
          ))}
          <TreeRoot label="Ship Modifications" open />
          <ul>
            {rigGroups.map((g, i) => (
              <TreeLeaf key={g} label={g} last={i === rigGroups.length - 1} selected={g === 'Energy Grid Rigs'} />
            ))}
          </ul>
          <TreeRoot label="Smartbombs" />
        </div>
        <div className="mr-px flex w-[16px] flex-col bg-[#f3f1ec] py-[2px]">
          <button
            aria-label="Scroll up"
            className="flex h-4 items-center justify-center rounded-[2px] border border-[#9fb8e8] bg-[#c8d6fb]"
          >
            <Chevron up />
          </button>
          <div className="mt-[11px] flex h-[187px] flex-col items-center justify-center gap-px rounded-[2px] border border-[#aabff0] bg-linear-to-r from-[#cddafd] to-[#b9cbf8]">
            {[0, 1, 2, 3].map((n) => (
              <span key={n} className="h-px w-[7px] border-b border-[#8ba6e8]" />
            ))}
          </div>
          <button
            aria-label="Scroll down"
            className="mt-auto flex h-4 items-center justify-center rounded-[2px] border border-[#9fb8e8] bg-[#c8d6fb]"
          >
            <Chevron />
          </button>
        </div>
      </div>
      <div className="h-2 shrink-0 bg-[#ece9d8]" />
      <div className="min-h-0 flex-1 border border-[#7f9db9] bg-white">
        <table className="w-full table-fixed border-collapse whitespace-nowrap">
          <colgroup>
            <col className="w-[176px]" />
            <col className="w-[30px]" />
            <col className="w-[30px]" />
            <col />
          </colgroup>
          <thead>
            <tr>
              <Th className="pl-[10px]">Name</Th>
              <Th>
                <Icon name="board" className="ml-[12px] size-4" />
              </Th>
              <Th>
                <Icon name="grid" className="ml-[12px] size-4" />
              </Th>
              <Th />
            </tr>
          </thead>
          <tbody>
            {rigs.map((r, i) => (
              <tr key={i} className="h-[17px]">
                <td className="p-0 leading-[17px]">
                  <div className="flex items-center gap-[2px] pl-[5px]">
                    <Icon name="rig" />
                    {r}
                  </div>
                </td>
                <td className="p-0 pl-[7px] leading-[17px]">0</td>
                <td className="p-0 pl-[7px] leading-[17px]">0</td>
                <td className="p-0" />
              </tr>
            ))}
          </tbody>
        </table>
      </div>
      <div className="grid h-[15px] grid-cols-4 leading-[13px] text-white">
        <button className="bg-[#dedbd2]">Market</button>
        <button>Faction</button>
        <button>Complex</button>
        <button>Commander</button>
      </div>
    </div>
  </nav>
);

/* ---------- app ---------- */

export default function App() {
  return (
    <div className="flex h-screen flex-col overflow-hidden bg-[#808080] font-[Roboto,Arial,sans-serif] text-[11px] leading-[14px] text-black">
      <Defs />
      <header className="flex h-[26px] shrink-0 items-center bg-linear-to-b from-[#3b93ff] via-[#0355e4] via-30% to-[#0166ff] pr-[4px] pl-[2px]">
        <Icon name="ship" />
        <h1 className="ml-1 flex-1 font-[Open_Sans,sans-serif] text-[13px] font-bold text-white [text-shadow:1px_1px_1px_#0a1883]">
          EFT - Eve Fitting Tool
        </h1>
        <div className="flex gap-[2px]">
          <CaptionButton kind="Minimize" active />
          <CaptionButton kind="Restore" active />
          <CaptionButton kind="Close" active />
        </div>
      </header>
      <div className="flex h-[20px] shrink-0 items-center gap-[12px] bg-[#ece9d8] pb-[2px] pl-[5px]">
        <button>File</button>
        <button>View</button>
        <button>Window</button>
        <button>Help</button>
      </div>
      <div className="flex min-h-0 flex-1 border-t-2 border-[#a09d90]">
        <Sidebar />
        <main className="relative min-w-0 flex-1 overflow-hidden border-r border-b border-[#ece9d8] bg-[#808080]">
          <MdiWindow title="Ship Browser" className="top-[500px] left-[345px] h-[353px] w-[366px]">
            <div className="flex min-h-0 flex-1 flex-col bg-[#ece9d8] px-[4px] pb-[4px]">
              <div className="flex-1 border border-[#7f9db9] bg-white" />
              <Group title="Description" className="mt-[7px] h-[56px]">
                <div className="flex flex-col items-end pr-[7px]">
                  {['up', 'down'].map((dir) => (
                    <button
                      key={dir}
                      aria-label={`Description ${dir}`}
                      className="flex h-[18px] w-[16px] items-center justify-center rounded-[2px] border border-white bg-[#efede4] shadow-[1px_1px_0_#d5d2c4]"
                    >
                      <Chevron up={dir === 'up'} color="#c3c0b2" />
                    </button>
                  ))}
                </div>
              </Group>
            </div>
          </MdiWindow>
          <MdiWindow title="Setups for Nightmare Battleship" className="top-[-7px] left-[5px] h-[767px] w-[744px]">
            <SetupBody
              setup="Mission"
              character="tamji"
              skillsOk
              modules={nightmare}
              ship={nightmareShip}
            />
          </MdiWindow>
          <MdiWindow
            title="Setups for Paladin Marauder"
            active
            className="top-0 left-[757px] h-[767px] w-[737px]"
          >
            <SetupBody
              setup="all skills"
              character="Indyra"
              skillsOk={false}
              modules={paladin}
              ship={paladinShip}
              drones="Hammerhead II x5"
            />
          </MdiWindow>
        </main>
      </div>
    </div>
  );
}
